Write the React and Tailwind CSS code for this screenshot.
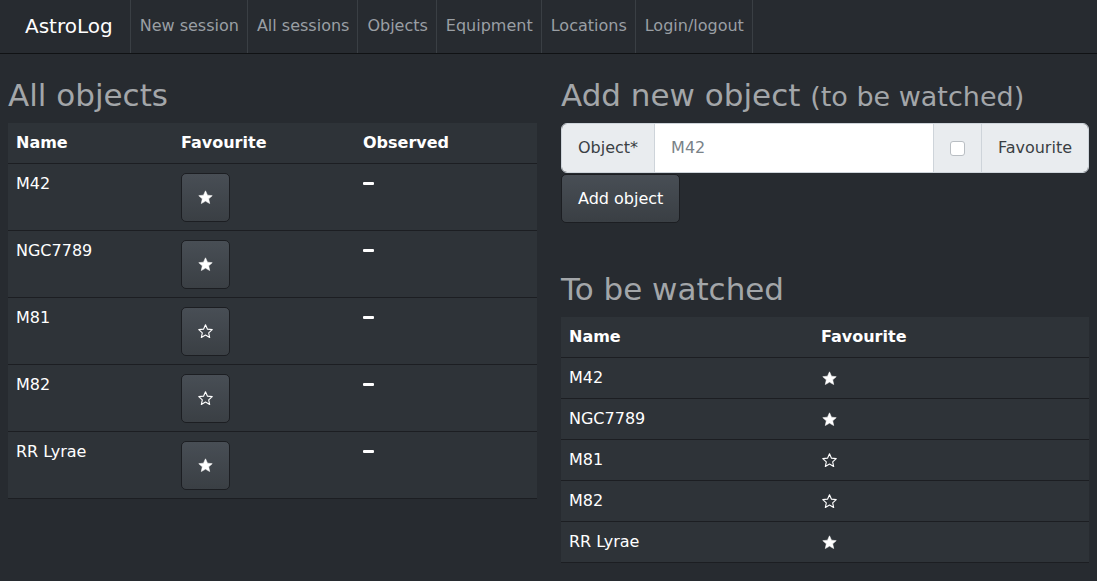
import React from "react";

const objects = [
	{ name: "M42", favourite: true },
	{ name: "NGC7789", favourite: true },
	{ name: "M81", favourite: false },
	{ name: "M82", favourite: false },
	{ name: "RR Lyrae", favourite: true },
];

const navLinks = ["New session", "All sessions", "Objects", "Equipment", "Locations", "Login/logout"];

const Star = ({ filled, size = 17 }) => (
	<svg width={size} height={size} viewBox="0 0 24 24" className="block">
		<path
			d="M12 2.6l2.8 6.1 6.7.7-5 4.5 1.4 6.6L12 17.1l-5.9 3.4 1.4-6.6-5-4.5 6.7-.7z"
			fill={filled ? "#fff" : "none"}
			stroke="#fff"
			strokeWidth={filled ? 0.8 : 1.6}
			strokeLinejoin="round"
		/>
	</svg>
);

const App = () => {
	return (
		<div className="min-h-[581px] bg-[#272b30] text-[#aaaaaa] font-['DejaVu_Sans',sans-serif] text-base">
			{/* Navbar */}
			<nav className="h-[54px] flex items-stretch border-b border-[#101214] bg-[#272b30]">
				<div className="flex items-center pl-[25px] pr-[17px] pb-[1px] text-[20px] text-white">AstroLog</div>
				<div className="flex items-stretch border-l border-[#3a3f44]">
					{navLinks.map((link) => (
						<a key={link} className="flex items-center pl-[9px] pr-[8px] pb-[1px] border-r border-[#3a3f44] text-[#9a9fa4]">
							{link}
						</a>
					))}
				</div>
			</nav>

			<div className="flex gap-6 px-2">
				{/* All objects */}
				<div className="w-[529px]">
					<h3 className="text-[31px] leading-[37px] pt-[23px] pb-[9px] text-[#a3a6a9]">All objects</h3>
					<div className="bg-[#2e3338] text-white">
						<div className="grid grid-cols-[165px_182px_182px] h-[41px] items-center font-bold border-b border-[#1c1e22]">
							<div className="px-2">Name</div>
							<div className="px-2">Favourite</div>
							<div className="px-2">Observed</div>
						</div>
						{objects.map((o) => (
							<div key={o.name} className="grid grid-cols-[165px_182px_182px] h-[67px] border-b border-[#1c1e22]">
								<div className="px-2 pt-2 leading-6">{o.name}</div>
								<div className="px-2 pt-[9px]">
									<button className="w-[49px] h-[49px] flex items-center justify-center rounded-[5px] border border-[#1c1e22] bg-gradient-to-b from-[#484e55] to-[#3a3f44]">
										<Star filled={o.favourite} />
									</button>
								</div>
								<div className="px-2 pt-[18px]">
									<span className="block w-[11px] h-[3px] bg-white rounded-[1px]"></span>
								</div>
							</div>
						))}
					</div>
				</div>

				{/* Right column */}
				<div className="w-[528px]">
					<h3 className="text-[31px] leading-[37px] pt-[23px] pb-[9px] text-[#a3a6a9] whitespace-nowrap">
						Add new object <span className="text-[27px] leading-none">(to be watched)</span>
					</h3>
					<div className="flex h-[50px] rounded-[6px] overflow-hidden border border-[#ced4da] text-[#3a3f44]">
						<div className="flex items-center px-4 bg-[#e9ecef] border-r border-[#ced4da]">Object*</div>
						<div className="flex-1 flex items-center px-4 bg-white text-[#7a8288]">M42</div>
						<div className="w-[49px] flex items-center justify-center bg-[#e9ecef] border-l border-r border-[#ced4da]">
							<span className="block w-[15px] h-[15px] bg-white border border-[#b9bec3] rounded-[3px]"></span>
						</div>
						<div className="flex items-center px-4 bg-[#e9ecef]">Favourite</div>
					</div>
					<button className="mt-[1px] h-[49px] px-4 rounded-[5px] border border-[#1c1e22] bg-gradient-to-b from-[#484e55] to-[#3a3f44] text-white">
						Add object
					</button>

					<h3 className="text-[31px] leading-[37px] pt-[48px] pb-[9px] text-[#a3a6a9]">To be watched</h3>
					<div className="bg-[#2e3338] text-white">
						<div className="grid grid-cols-[252px_276px] h-[41px] items-center font-bold border-b border-[#1c1e22]">
							<div className="px-2">Name</div>
							<div className="px-2">Favourite</div>
						</div>
						{objects.map((o) => (
							<div key={o.name} className="grid grid-cols-[252px_276px] h-[41px] items-center border-b border-[#1c1e22]">
								<div className="px-2">{o.name}</div>
								<div className="px-2">
									<Star filled={o.favourite} />
								</div>
							</div>
						))}
					</div>
				</div>
			</div>
		</div>
	);
};

export default App;
